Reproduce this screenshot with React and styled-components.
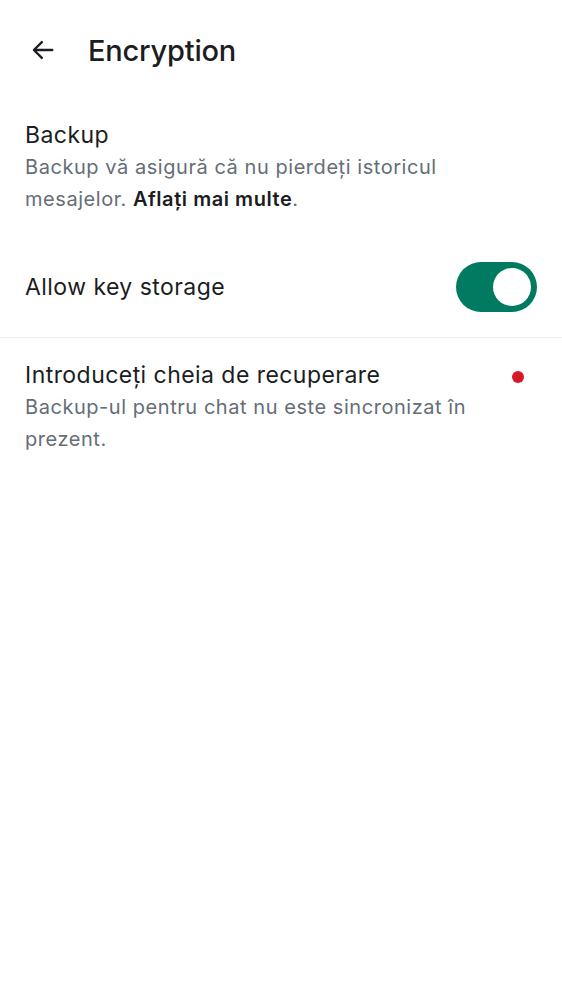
import React from 'react';
import styled, { createGlobalStyle } from 'styled-components';

const GlobalStyle = createGlobalStyle`
  html, body {
    margin: 0;
    padding: 0;
    background: #ffffff;
  }
  body {
    font-family: Inter, "Noto Sans", sans-serif;
    color: #1b1d22;
    -webkit-font-smoothing: antialiased;
  }
`;

const Screen = styled.div`
  width: 562px;
  min-height: 1000px;
  background: #ffffff;
`;

const Header = styled.header`
  height: 100px;
  display: flex;
  align-items: center;
  padding-left: 29px;
  gap: 31px;
`;

const BackButton = styled.button`
  width: 28px;
  height: 28px;
  padding: 0;
  border: none;
  background: none;
  display: flex;
  align-items: center;
  justify-content: center;
  color: #1b1d22;
`;

const Title = styled.h1`
  margin: 0;
  font-size: 29px;
  font-weight: 500;
  letter-spacing: -0.2px;
`;

const Section = styled.section`
  padding: ${p => p.$pad || '0'};
  display: flex;
  align-items: ${p => p.$center ? 'center' : 'flex-start'};
  gap: 16px;
  border-bottom: ${p => p.$divider ? '1px solid #ebeef2' : 'none'};
`;

const TextCol = styled.div`
  flex: 1;
  min-width: 0;
  max-width: ${p => p.$max || 'none'};
`;

const ItemTitle = styled.div`
  font-size: 23px;
  line-height: 32px;
  font-weight: 400;
  letter-spacing: 0.45px;
  color: #1b1d22;
`;

const ItemDesc = styled.p`
  margin: 0;
  font-size: 20px;
  line-height: 32px;
  letter-spacing: 0.55px;
  color: #656d77;

  b {
    font-weight: 600;
    color: #1b1d22;
  }
`;

const Toggle = styled.div`
  width: 81px;
  height: 50px;
  border-radius: 25px;
  background: #007a61;
  display: flex;
  align-items: center;
  justify-content: flex-end;
  padding-right: 6px;
  box-sizing: border-box;
  flex-shrink: 0;
`;

const Knob = styled.span`
  width: 38px;
  height: 38px;
  border-radius: 50%;
  background: #ffffff;
`;

const DotBox = styled.div`
  width: 24px;
  height: 32px;
  display: flex;
  align-items: center;
  justify-content: center;
  flex-shrink: 0;
`;

const Dot = styled.span`
  width: 12px;
  height: 12px;
  border-radius: 50%;
  background: #d51928;
  margin-top: 4px;
`;

const ArrowIcon = () => (
  <svg width="28" height="28" viewBox="0 0 24 24" fill="none">
    <path d="M20 12H4.5M11 5.2L4.2 12l6.8 6.8" stroke="currentColor" strokeWidth="2" strokeLinecap="round" strokeLinejoin="round" />
  </svg>
);

export default function App() {
  return (
    <>
      <GlobalStyle />
      <Screen>
        <Header>
          <BackButton aria-label="Back"><ArrowIcon /></BackButton>
          <Title>Encryption</Title>
        </Header>

        <Section $pad="19px 25px 22px 25px">
          <TextCol $max="480px">
            <ItemTitle>Backup</ItemTitle>
            <ItemDesc>
              Backup vă asigură că nu pierdeți istoricul mesajelor. <b>Aflați mai multe</b>.
            </ItemDesc>
          </TextCol>
        </Section>

        <Section $pad="25px 25px" $center $divider>
          <TextCol>
            <ItemTitle>Allow key storage</ItemTitle>
          </TextCol>
          <Toggle><Knob /></Toggle>
        </Section>

        <Section $pad="21px 32px 21px 25px">
          <TextCol>
            <ItemTitle>Introduceți cheia de recuperare</ItemTitle>
            <ItemDesc>Backup-ul pentru chat nu este sincronizat în prezent.</ItemDesc>
          </TextCol>
          <DotBox><Dot /></DotBox>
        </Section>
      </Screen>
    </>
  );
}
